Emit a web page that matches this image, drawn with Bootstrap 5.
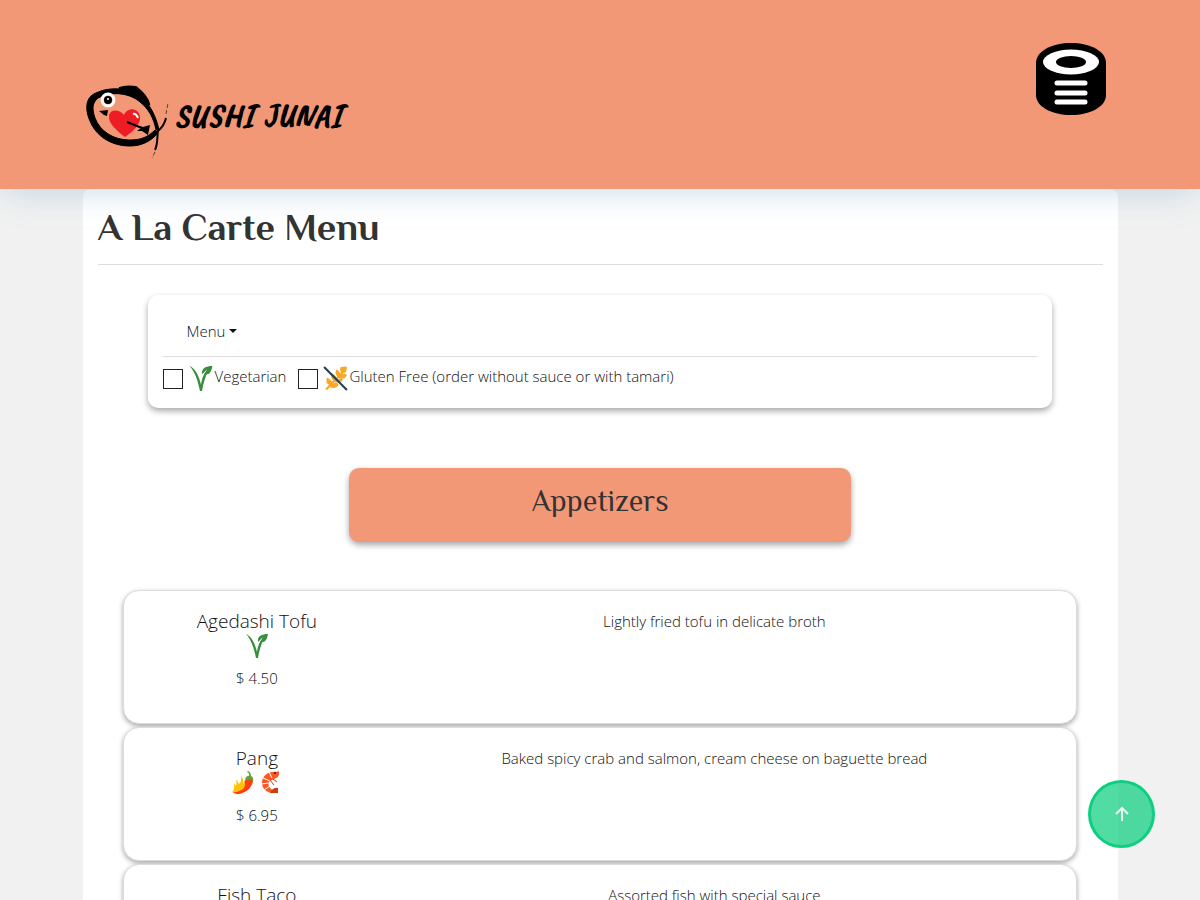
<!DOCTYPE html>
<html lang="en">
<head>
<meta charset="utf-8">
<meta name="viewport" content="width=device-width, initial-scale=1">
<title>Sushi Junai - A La Carte Menu</title>
<link href="https://cdn.jsdelivr.net/npm/bootstrap@5.3.0/dist/css/bootstrap.min.css" rel="stylesheet">
<style>
body{background:#f1f1f1;color:#111;font-family:"Open Sans",sans-serif;font-weight:300;font-size:15px;line-height:24px}
h1,h2{font-family:Philosopher,"Liberation Serif",serif;color:#333}
.page-wrap{max-width:1035px}
.site-header{background:#f29877;position:relative;z-index:2;box-shadow:0 10px 30px -6px rgba(120,165,200,.35);height:189px}
.brand{color:#000;margin-top:84px}
.brand-name{font-family:"Caveat Brush","Liberation Sans",sans-serif;font-weight:400;font-style:italic;font-size:35px;line-height:60px;padding-bottom:14px}
.menu-toggle{margin:42px 11px 0 0}
.sheet{background:#fff;border-radius:8px;padding:16px 15px 60px}
.page-title{font-size:38px;line-height:44px;font-weight:700;margin-bottom:15px}
.rule{border-top:1px solid #dedede}
.panel-box{background:#fff;border-radius:10px;box-shadow:0 3px 6px rgba(0,0,0,.35)}
.filters{margin:30px 51px 0 50px;padding:20px 15px 16px}
.menu-btn{font-weight:300;font-size:15px;line-height:24px;color:#111;padding:4px 24px 5px;border:0}
.menu-btn::after{margin-left:4px}
.filters label{line-height:22px}
.filters .form-check-input{width:20px;height:20px;border:1px solid #222;border-radius:0}
.category{width:502px;max-width:100%;margin:60px auto 0;background:#f29877;padding:16px 15px 24px}
.category h2{font-size:30px;line-height:34px;font-weight:400}
.dishes{margin:48px 26px 0 25px;gap:3px}
.dish{background:#fff;border:1px solid #ddd;border-radius:16px;padding:18px 18px 18px 19px;min-height:134px;box-shadow:0 2px 5px rgba(0,0,0,.35)}
.dish-name{font-size:19px;line-height:24px}
.tags{height:26px;gap:2px}
.price{margin-top:7px}
.to-top{right:45px;bottom:52px;width:67px;height:68px;background:rgba(14,207,129,.72);border:3px solid #0ecf81;z-index:5}
</style>
</head>
<body>
<svg class="d-none" aria-hidden="true">
  <symbol id="veg" viewBox="0 0 26 26">
    <path d="M2 1C7 3 11 10 13 19C14 12 16 8 18 7L20 5C17 12 15 18 14 25H12C10 15 7 6 2 1Z" fill="#388e3c"/>
    <path d="M24 1C18 1 13 3 14 9L19 4L16 9C21 10 23 7 24 1Z" fill="#388e3c"/>
  </symbol>
  <symbol id="gluten" viewBox="0 0 26 26">
    <g fill="#f9a825"><path d="M3 23L21 4L22 6L5 24Z"/><path d="M18 2Q24 1 24 2Q24 8 20 8Q16 6 18 2Z"/><path d="M14 4Q20 8 17 13Q11 9 14 4Z"/><path d="M10 8Q17 13 13 17Q7 13 10 8Z"/><path d="M5 12Q13 17 9 20Q2 18 5 12Z"/><path d="M16 11Q22 6 24 10Q21 15 16 12Z"/><path d="M12 15Q19 11 20 14Q18 19 12 16Z"/><path d="M8 19Q15 15 16 19Q13 24 7 21Z"/></g>
    <path d="M2 2L24 24" stroke="#263f4c" stroke-width="2"/>
  </symbol>
  <symbol id="spicy" viewBox="0 0 26 26">
    <path d="M3 22C9 22 13 19 15 10Q18 7 23 9C24 15 17 23 9 24Q4 24 3 22Z" fill="#ff3d0b"/>
    <path d="M2 22Q5 20 4 13L6 16Q7 14 6 9L9 14Q12 11 11 6Q14 9 13 14L15 12Q16 19 9 21Q5 23 2 22Z" fill="#ffc107"/>
    <path d="M15 9Q17 5 19 6Q20 3 17 2L18 1Q21 2 21 6Q24 7 23 11L20 9L18 11Z" fill="#689f38"/>
  </symbol>
  <symbol id="shrimp" viewBox="0 0 26 26">
    <path d="M19 2C10 1 4 6 4 13C4 19 9 22 13 23L15 20C11 18 9 14 12 11L20 7L21 3Z" fill="#ff5722"/>
    <path d="M16 3L21 1L21 5L17 8Z" fill="#ff5722"/><circle cx="17" cy="3" r="1" fill="#222"/>
    <path d="M5 8L12 11M3 14L11 13M6 20L12 16M11 2L14 8" stroke="#fff" stroke-width="1"/>
    <path d="M12 23Q15 17 20 18V23Z" fill="#d93612"/>
    <path d="M12 10L16 15M15 9L19 12" stroke="#d93612" stroke-width="1"/>
  </symbol>
</svg>

<header class="site-header">
  <div class="container-fluid page-wrap px-0 d-flex justify-content-between align-items-start">
    <a href="#" class="brand d-flex align-items-center text-decoration-none">
      <svg width="88" height="78" viewBox="0 0 88 78" aria-hidden="true">
        <path d="M13 9C2 13 2 26 7 37C13 52 28 62 47 62C60 62 69 56 75 49L72 46C65 53 58 56 47 56C30 56 17 47 12 34C9 25 9 19 15 14C30 6 48 10 57 18C66 25 71 35 73 46L76 46C73 32 67 20 57 12C44 3 25 3 13 9Z" stroke="#000" stroke-width="1"/>
        <path d="M37 4C43 1 50 3 53 3C58 7 65 14 66 20L62 18L51 9C45 6 42 9 39 7Z" stroke="#000" stroke-width="2"/>
        <path d="M75 46C74 53 75 60 72 66M75 47C80 43 82 38 83 34" fill="none" stroke="#000" stroke-width="2"/>
        <path d="M72 68L69 74M83 30L85 19" fill="none" stroke="#543" stroke-width="1" stroke-dasharray="4 2"/>
        <path d="M42 53C34 47 25 39 26 32C27 25 36 25 41 31C43 25 51 23 55 28C62 37 50 48 42 53Z" fill="#ee1c25"/>
        <path d="M50 30Q53 29 55 34" fill="none" stroke="#fff" stroke-width="2"/>
        <path d="M44 38L59 44" stroke="#000" stroke-width="2"/><path d="M55 42L60 43L67 41L65 51L59 47L54 47L58 44Z"/>
        <path d="M16 27L25 26L24 32L21 31Z"/>
        <circle cx="25" cy="16" r="6" fill="#f29877" stroke="#fff" stroke-width="3"/><circle cx="25" cy="16" r="4"/><circle cx="25" cy="15" r="1" fill="#fff"/>
      </svg>
      <span class="brand-name ps-1">SUSHI JUNAI</span>
    </a>
    <button class="menu-toggle btn p-0 border-0" type="button" aria-label="Open navigation">
      <svg class="d-block" width="72" height="74" viewBox="0 0 72 74" aria-hidden="true">
        <path d="M1 21C1 9 17 1 36 1S71 9 71 21V53C71 65 55 73 36 73S1 65 1 53Z"/>
        <ellipse cx="36" cy="20" rx="28" ry="12.5" fill="#fff"/><ellipse cx="36" cy="20" rx="15" ry="6"/>
        <path d="M22 41H50M22 51H50M22 60H50" stroke="#fff" stroke-width="5" stroke-linecap="round"/>
      </svg>
    </button>
  </div>
</header>

<main class="container-fluid page-wrap sheet">
  <h1 class="page-title">A La Carte Menu</h1>
  <div class="rule"></div>

  <section class="panel-box filters">
    <div class="dropdown">
      <button class="menu-btn btn dropdown-toggle" type="button" data-bs-toggle="dropdown">Menu</button>
      <ul class="dropdown-menu"><li><a class="dropdown-item" href="#appetizers">Appetizers</a></li></ul>
    </div>
    <div class="rule mt-2 mb-2"></div>
    <div class="d-flex flex-wrap align-items-center">
      <input class="form-check-input m-0" type="checkbox" id="f-veg">
      <label class="d-flex align-items-start ms-1 me-2 pe-1" for="f-veg"><svg width="28" height="27"><use href="#veg"/></svg>Vegetarian</label>
      <input class="form-check-input m-0" type="checkbox" id="f-gf">
      <label class="d-flex align-items-start ms-1" for="f-gf"><svg width="27" height="27"><use href="#gluten"/></svg>Gluten Free (order without sauce or with tamari)</label>
    </div>
  </section>

  <section class="panel-box category text-center" id="appetizers">
    <h2 class="mb-0">Appetizers</h2>
  </section>

  <div class="dishes d-flex flex-column text-center">
    <article class="dish"><div class="row g-0">
      <div class="col-3">
        <div class="dish-name">Agedashi Tofu</div>
        <div class="tags d-flex justify-content-center"><svg width="26" height="26"><use href="#veg"/></svg></div>
        <div class="price">$ 4.50</div>
      </div>
      <div class="col-9">Lightly fried tofu in delicate broth</div>
    </div></article>
    <article class="dish"><div class="row g-0">
      <div class="col-3">
        <div class="dish-name">Pang</div>
        <div class="tags d-flex justify-content-center"><svg width="26" height="26"><use href="#spicy"/></svg><svg width="26" height="26"><use href="#shrimp"/></svg></div>
        <div class="price">$ 6.95</div>
      </div>
      <div class="col-9">Baked spicy crab and salmon, cream cheese on baguette bread</div>
    </div></article>
    <article class="dish"><div class="row g-0">
      <div class="col-3"><div class="dish-name">Fish Taco</div></div>
      <div class="col-9">Assorted fish with special sauce</div>
    </div></article>
  </div>
</main>

<button class="to-top btn rounded-circle position-fixed p-0 d-flex align-items-center justify-content-center" type="button" aria-label="Back to top">
  <svg width="14" height="14" viewBox="0 0 14 14" fill="none" stroke="#f1f1f1" stroke-width="2" aria-hidden="true"><path d="M7 14V2M1 7L7 1L13 7"/></svg>
</button>
<script src="https://cdn.jsdelivr.net/npm/bootstrap@5.3.0/dist/js/bootstrap.bundle.min.js"></script>
</body>
</html>
